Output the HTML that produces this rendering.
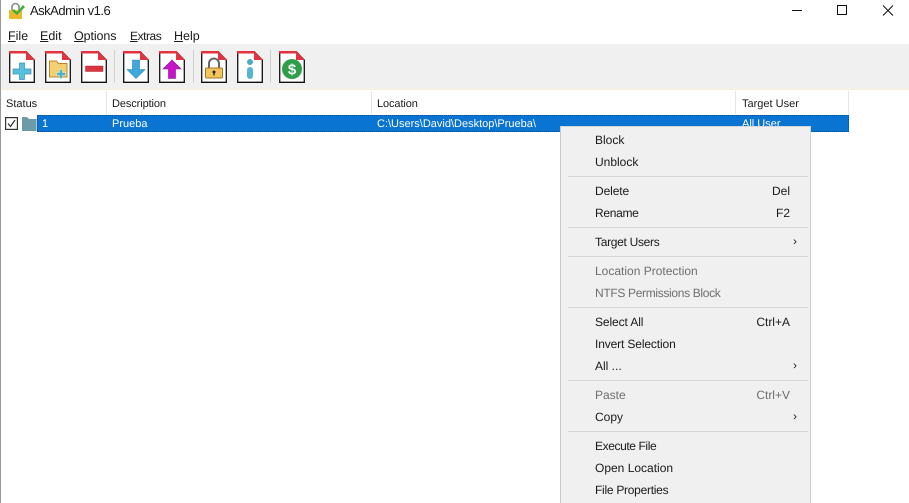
<!DOCTYPE html>
<html><head><meta charset="utf-8"><style>
html,body{margin:0;padding:0;background:#fff}
#p{position:relative;width:909px;height:503px;overflow:hidden;background:#fff;font-family:"Liberation Sans",sans-serif;font-size:12px;color:#1a1a1a;text-rendering:geometricPrecision}
.a{position:absolute;white-space:nowrap;line-height:16px}
u{text-decoration:underline}
.b{position:absolute}
.s{position:absolute;left:568px;width:240px;height:1px;background:#d4d4d4}
.d{color:#6f6f6f}
.tb{position:absolute;top:51px;width:26px;height:32px}
.sep{position:absolute;top:50px;width:1px;height:33px;background:#d0d0d0}
.h{position:absolute;top:91px;width:1px;height:23px;background:#e5e5e5}
</style></head><body><div id="p">
<div class="b" style="left:0;top:0;width:1px;height:503px;background:#999"></div>
<svg class="b" style="left:8px;top:2px" width="20" height="17" viewBox="0 0 20 17"><path d="M4 8V5a3.500 3.500 0 0 1 7 0v3" fill="none" stroke="#8a8a80" stroke-width="1.600"/><rect x="1" y="8" width="13" height="9" fill="#e9b92f"/><path d="M6 7l3 3 6-7 2 2-8 8-5-4z" fill="#3fae3a"/></svg>
<div class="a" style="left:30px;top:3px;font-size:13px;letter-spacing:-.5px">AskAdmin v1.6</div>
<svg class="b" style="left:792px;top:4px" width="102" height="14"><path d="M0 6.500H10" stroke="#111"/><rect x="45.500" y="1.500" width="9" height="9" fill="none" stroke="#111"/><path d="M91 1.500l10 10M101 1.500l-10 10" stroke="#111" fill="none"/></svg>
<div class="a" style="left:8px;top:28px;font-size:12.500px"><u>F</u>ile</div>
<div class="a" style="left:40px;top:28px;font-size:12.500px"><u>E</u>dit</div>
<div class="a" style="left:74px;top:28px;font-size:12.500px;letter-spacing:-.1px"><u>O</u>ptions</div>
<div class="a" style="left:130px;top:28px;font-size:12px;letter-spacing:-.45px"><u>E</u>xtras</div>
<div class="a" style="left:174px;top:28px;font-size:12.500px"><u>H</u>elp</div>
<div class="b" style="left:1px;top:44px;width:908px;height:44px;background:#f0f0f0"></div>
<div class="b" style="left:1px;top:88px;width:908px;height:2px;background:#f3f1e6"></div>
<svg width="0" height="0" style="position:absolute"><defs><symbol id="pg" viewBox="0 0 26 32"><path d="M.700 1.500H18L25.300 9V31.300H.700Z" fill="#fff" stroke="#111" stroke-width="1.300"/><path d="M0 0H18V2.500H0Z" fill="#e2333f"/><path d="M17 0L26 9V9H17Z" fill="#e2333f"/></symbol></defs></svg>
<svg class="tb" style="left:9px"><use href="#pg"/><path d="M10.500 12h5v6h6.500v5h-6.500v5.500h-5V23H4v-5h6.500z" fill="#58bfdc" stroke="#3a94b5" stroke-width=".7"/></svg>
<svg class="tb" style="left:45px"><use href="#pg"/><path d="M4.500 10h7l2 2.500h8.500V26H4.500z" fill="#f3cf72" stroke="#b9862c"/><path d="M14.500 18.500h3v3h3v3h-3v3h-3v-3h-3v-3h3z" fill="#4fb3c8" stroke="#fff" stroke-width=".4"/></svg>
<svg class="tb" style="left:81px"><use href="#pg"/><rect x="4.500" y="15" width="17.500" height="5.500" fill="#d93542" stroke="#b02a36" stroke-width=".5"/></svg>
<div class="sep" style="left:114px"></div>
<svg class="tb" style="left:123px"><use href="#pg"/><path d="M9.500 9h7v9.500H22L13 27.500 4 18.500h5.500z" fill="#3fa8dc" stroke="#2e84b5" stroke-width=".6"/></svg>
<svg class="tb" style="left:159px"><use href="#pg"/><path d="M13 9l9 9h-5.500v9.500h-7V18H4z" fill="#c814c8" stroke="#8e0e8e" stroke-width=".6"/></svg>
<div class="sep" style="left:193px"></div>
<svg class="tb" style="left:201px"><use href="#pg"/><path d="M8 17v-4.500a5 5 0 0 1 10 0V17" fill="none" stroke="#666" stroke-width="2"/><rect x="4.500" y="17" width="17" height="10" rx="1" fill="#f2c45a" stroke="#a97a22"/><circle cx="13" cy="21" r="1.500" fill="#222"/><rect x="12.400" y="21.500" width="1.200" height="3" fill="#222"/></svg>
<svg class="tb" style="left:237px"><use href="#pg"/><circle cx="13" cy="11" r="3" fill="#4fa9c9"/><rect x="10" y="16" width="6" height="12" rx="3" fill="#58b5d6"/></svg>
<div class="sep" style="left:270px"></div>
<svg class="tb" style="left:279px"><use href="#pg"/><circle cx="13" cy="18" r="10" fill="#2f9e4a"/><text x="13" y="23.500" font-family="Liberation Sans,sans-serif" font-size="15" font-weight="bold" fill="#fff" text-anchor="middle">$</text></svg>
<div class="h" style="left:106px"></div><div class="h" style="left:371px"></div><div class="h" style="left:735px"></div><div class="h" style="left:848px"></div>
<div class="a" style="left:6px;top:96px;font-size:11px">Status</div>
<div class="a" style="left:112px;top:96px;font-size:11px;letter-spacing:-.1px">Description</div>
<div class="a" style="left:377px;top:96px;font-size:11px;letter-spacing:-.1px">Location</div>
<div class="a" style="left:742px;top:96px;font-size:11px">Target User</div>
<div class="b" style="left:37px;top:115px;width:812px;height:17px;background:#0a74d2;border:1px dotted #0a4f90;box-sizing:border-box"></div>
<svg class="b" style="left:5px;top:117px" width="32" height="14"><rect x=".600" y=".600" width="11.800" height="11.800" fill="#fff" stroke="#333" stroke-width="1.200"/><path d="M3 6.500l2.500 3L10 3" fill="none" stroke="#333" stroke-width="1.200"/><path d="M17 0h5l2 2h7.500v12H17z" fill="#6d9aa8"/></svg>
<div class="a" style="left:42px;top:116px;color:#fff;font-size:11px">1</div>
<div class="a" style="left:112px;top:116px;color:#fff;font-size:11px;line-height:17px">Prueba</div>
<div class="a" style="left:377px;top:116px;color:#fff;font-size:11px;line-height:17px">C:\Users\David\Desktop\Prueba\</div>
<div class="a" style="left:742px;top:116px;color:#fff;font-size:11px;line-height:17px">All User</div>
<div class="b" style="left:560px;top:126px;width:251px;height:377px;background:#f0f0f0;border-left:1px solid #c8c8c8;border-top:1px solid #d8d8d8;border-right:1px solid #d0d0d0;box-sizing:border-box"></div>
<div class="a" style="left:595px;top:132px">Block</div>
<div class="a" style="left:595px;top:154px">Unblock</div>
<div class="s" style="top:176px"></div>
<div class="a" style="left:595px;top:183px;letter-spacing:-.1px">Delete</div><div class="a" style="right:119px;top:183px">Del</div>
<div class="a" style="left:595px;top:205px;letter-spacing:-.3px">Rename</div><div class="a" style="right:119px;top:205px">F2</div>
<div class="s" style="top:227px"></div>
<div class="a" style="left:595px;top:234px;letter-spacing:-.3px">Target Users</div><div class="a" style="left:793px;top:233px">›</div>
<div class="s" style="top:256px"></div>
<div class="a d" style="left:595px;top:263px">Location Protection</div>
<div class="a d" style="left:595px;top:285px;letter-spacing:-.33px">NTFS Permissions Block</div>
<div class="s" style="top:307px"></div>
<div class="a" style="left:595px;top:314px;letter-spacing:-.1px">Select All</div><div class="a" style="right:119px;top:314px">Ctrl+A</div>
<div class="a" style="left:595px;top:336px;letter-spacing:-.13px">Invert Selection</div>
<div class="a" style="left:595px;top:358px">All ...</div><div class="a" style="left:793px;top:357px">›</div>
<div class="s" style="top:380px"></div>
<div class="a d" style="left:595px;top:387px">Paste</div><div class="a d" style="right:119px;top:387px">Ctrl+V</div>
<div class="a" style="left:595px;top:409px">Copy</div><div class="a" style="left:793px;top:408px">›</div>
<div class="s" style="top:431px"></div>
<div class="a" style="left:595px;top:438px;letter-spacing:-.4px">Execute File</div>
<div class="a" style="left:595px;top:460px">Open Location</div>
<div class="a" style="left:595px;top:482px;letter-spacing:-.27px">File Properties</div>
</div></body></html>
